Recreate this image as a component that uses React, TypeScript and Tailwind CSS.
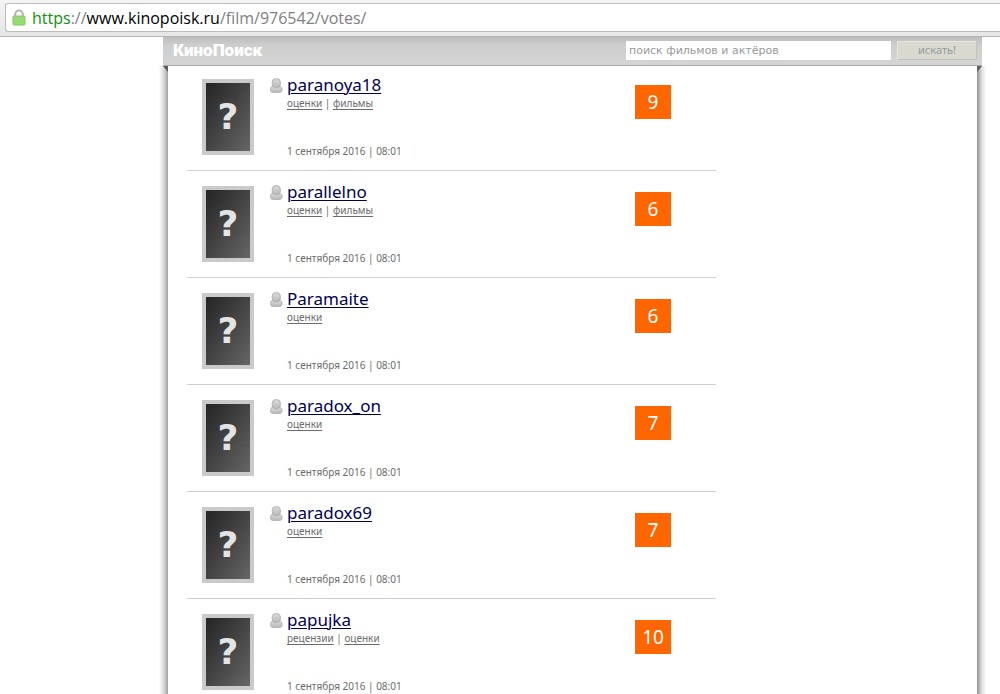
import { useState } from 'react';

type Vote = {
  name: string;
  links: string[];
  date: string;
  score: number;
};

const DATE = '1 сентября 2016 | 08:01';

const VOTES: Vote[] = [
  { name: 'paranoya18', links: ['оценки', 'фильмы'], date: DATE, score: 9 },
  { name: 'parallelno', links: ['оценки', 'фильмы'], date: DATE, score: 6 },
  { name: 'Paramaite', links: ['оценки'], date: DATE, score: 6 },
  { name: 'paradox_on', links: ['оценки'], date: DATE, score: 7 },
  { name: 'paradox69', links: ['оценки'], date: DATE, score: 7 },
  { name: 'papujka', links: ['рецензии', 'оценки'], date: DATE, score: 10 },
];

function LockIcon() {
  return (
    <svg width="14" height="17" viewBox="0 0 14 17" className="shrink-0" aria-hidden="true">
      <defs>
        <linearGradient id="lock" x1="0" y1="0" x2="0" y2="1">
          <stop offset="0" stopColor="#a3d47e" />
          <stop offset="1" stopColor="#8ce364" />
        </linearGradient>
      </defs>
      <path d="M3.200 8V5.300a3.800 3.800 0 0 1 7.600 0V8" fill="none" stroke="#b4b4b4" strokeWidth="2" />
      <rect x="1" y="7" width="12" height="9" rx="1" fill="url(#lock)" stroke="#86c468" />
    </svg>
  );
}

function UserIcon() {
  return (
    <svg width="13" height="15" viewBox="0 0 13 15" className="shrink-0" aria-hidden="true">
      <defs>
        <linearGradient id="user" x1="0" y1="0" x2="0" y2="1">
          <stop offset="0" stopColor="#dadada" />
          <stop offset="1" stopColor="#bababa" />
        </linearGradient>
      </defs>
      <path
        d="M3 8C1.200 8.400.4 9.700.4 11.600c0 1.800.8 2.800 2.400 2.800h6.900c1.600 0 2.400-1 2.400-2.800 0-1.900-.9-3.200-2.600-3.600Z"
        fill="url(#user)"
        stroke="#a9a9a9"
        strokeWidth="0.8"
      />
      <rect x="2.200" y="0.600" width="8.200" height="9" rx="3.600" fill="url(#user)" stroke="#a9a9a9" strokeWidth="0.8" />
    </svg>
  );
}

function Corner({ flip = false }: { flip?: boolean }) {
  return (
    <svg width="5" height="6" viewBox="0 0 5 6" className="block" aria-hidden="true">
      <path d={flip ? 'M0 0H5L0 6Z' : 'M0 0H5V6Z'} fill="#5c5c5c" />
    </svg>
  );
}

function VoteRow({ vote }: { vote: Vote }) {
  return (
    <li className="flex border-b border-[#cfcfcf] px-[15px] py-[15px] first:pt-[13px]">
      <div className="flex h-[76px] w-[52px] shrink-0 items-center justify-center border-4 border-[#cacaca] bg-linear-to-br from-[#252525] to-[#666] font-['DejaVu_Sans',sans-serif] text-4xl font-bold text-[#e4e4e4]">
        ?
      </div>

      <div className="-mt-1 ml-4 flex flex-1 flex-col">
        <div className="flex h-5 items-center gap-1">
          <UserIcon />
          <a
            href="#user"
            className="text-[17px] leading-5 text-[#000055] underline decoration-1 underline-offset-2"
          >
            {vote.name}
          </a>
        </div>

        <p className="ml-[17px] text-[10px] leading-4 text-[#6c6c6c]">
          {vote.links.map((link, index) => (
            <span key={link}>
              {index > 0 && ' | '}
              <a href="#list" className="underline decoration-1 underline-offset-2">
                {link}
              </a>
            </span>
          ))}
        </p>

        <p className="mt-auto ml-[17px] text-[10px] leading-2 text-[#6c6c6c]">{vote.date}</p>
      </div>

      <div className="mt-[6px] mr-[30px] flex h-[34px] w-9 items-center justify-center bg-[#ff6600] text-[19px] text-white">
        {vote.score}
      </div>
    </li>
  );
}

export default function App() {
  const [query, setQuery] = useState('');

  return (
    <div className="flex h-screen flex-col overflow-hidden bg-white font-['Noto_Sans',sans-serif]">
      <div className="h-[37px] shrink-0 border-b border-[#b4b4b4] bg-linear-to-b from-[#f4f4f4] to-[#e6e6e6] pt-[3px] pl-[5px]">
        <div className="flex h-[29px] items-center gap-[6px] rounded-l-[3px] border border-r-0 border-[#bdbdbd] bg-white pl-[6px]">
          <LockIcon />
          <a href="#votes" className="font-['Open_Sans',sans-serif] text-base leading-6 text-[#808080]">
            <span className="text-[#0a930a]">https</span>://
            <span className="text-black">www.kinopoisk.ru</span>/film/976542/votes/
          </a>
        </div>
      </div>

      <div className="mr-[18px] ml-[163px] flex flex-1 flex-col">
        <header className="flex h-[29px] shrink-0 items-center border-b border-[#a8a8a8] bg-linear-to-b from-[#bdbdbd] via-[#cecece] via-30% to-[#d5d5d5] pr-[5px] pb-[2px] pl-[10px]">
          <a
            href="#home"
            className="flex-1 font-['Roboto',sans-serif] text-[17px] leading-6 font-black text-white"
          >
            КиноПоиск
          </a>
          <form className="flex items-center gap-[6px]" onSubmit={(e) => e.preventDefault()}>
            <input
              type="text"
              aria-label="поиск фильмов и актёров"
              placeholder="поиск фильмов и актёров"
              value={query}
              onChange={(e) => setQuery(e.target.value)}
              className="h-[19px] w-[265px] bg-white px-[3px] font-['DejaVu_Sans',sans-serif] text-[11px] text-[#555] outline-none placeholder:text-[#999]"
            />
            <button
              type="submit"
              className="h-[19px] w-20 border border-t-[#e6e6e2] border-r-[#c2c2bc] border-b-[#c2c2bc] border-l-[#e6e6e2] bg-[#dad9d0] text-[11px] leading-4 text-[#929ba0]"
            >
              искать!
            </button>
          </form>
        </header>

        <div className="flex flex-1">
          <div className="-ml-1 flex w-[9px] justify-end bg-linear-to-r from-white via-[#dcdcdc] to-[#a2a2a2]">
            <Corner />
          </div>

          <main className="flex-1 px-[19px]">
            <ul className="max-w-[529px]">
              {VOTES.map((vote) => (
                <VoteRow key={vote.name} vote={vote} />
              ))}
            </ul>
          </main>

          <div className="-mr-1 w-[9px] bg-linear-to-r from-[#8f8f8f] via-[#dcdcdc] to-white">
            <Corner flip />
          </div>
        </div>
      </div>
    </div>
  );
}
